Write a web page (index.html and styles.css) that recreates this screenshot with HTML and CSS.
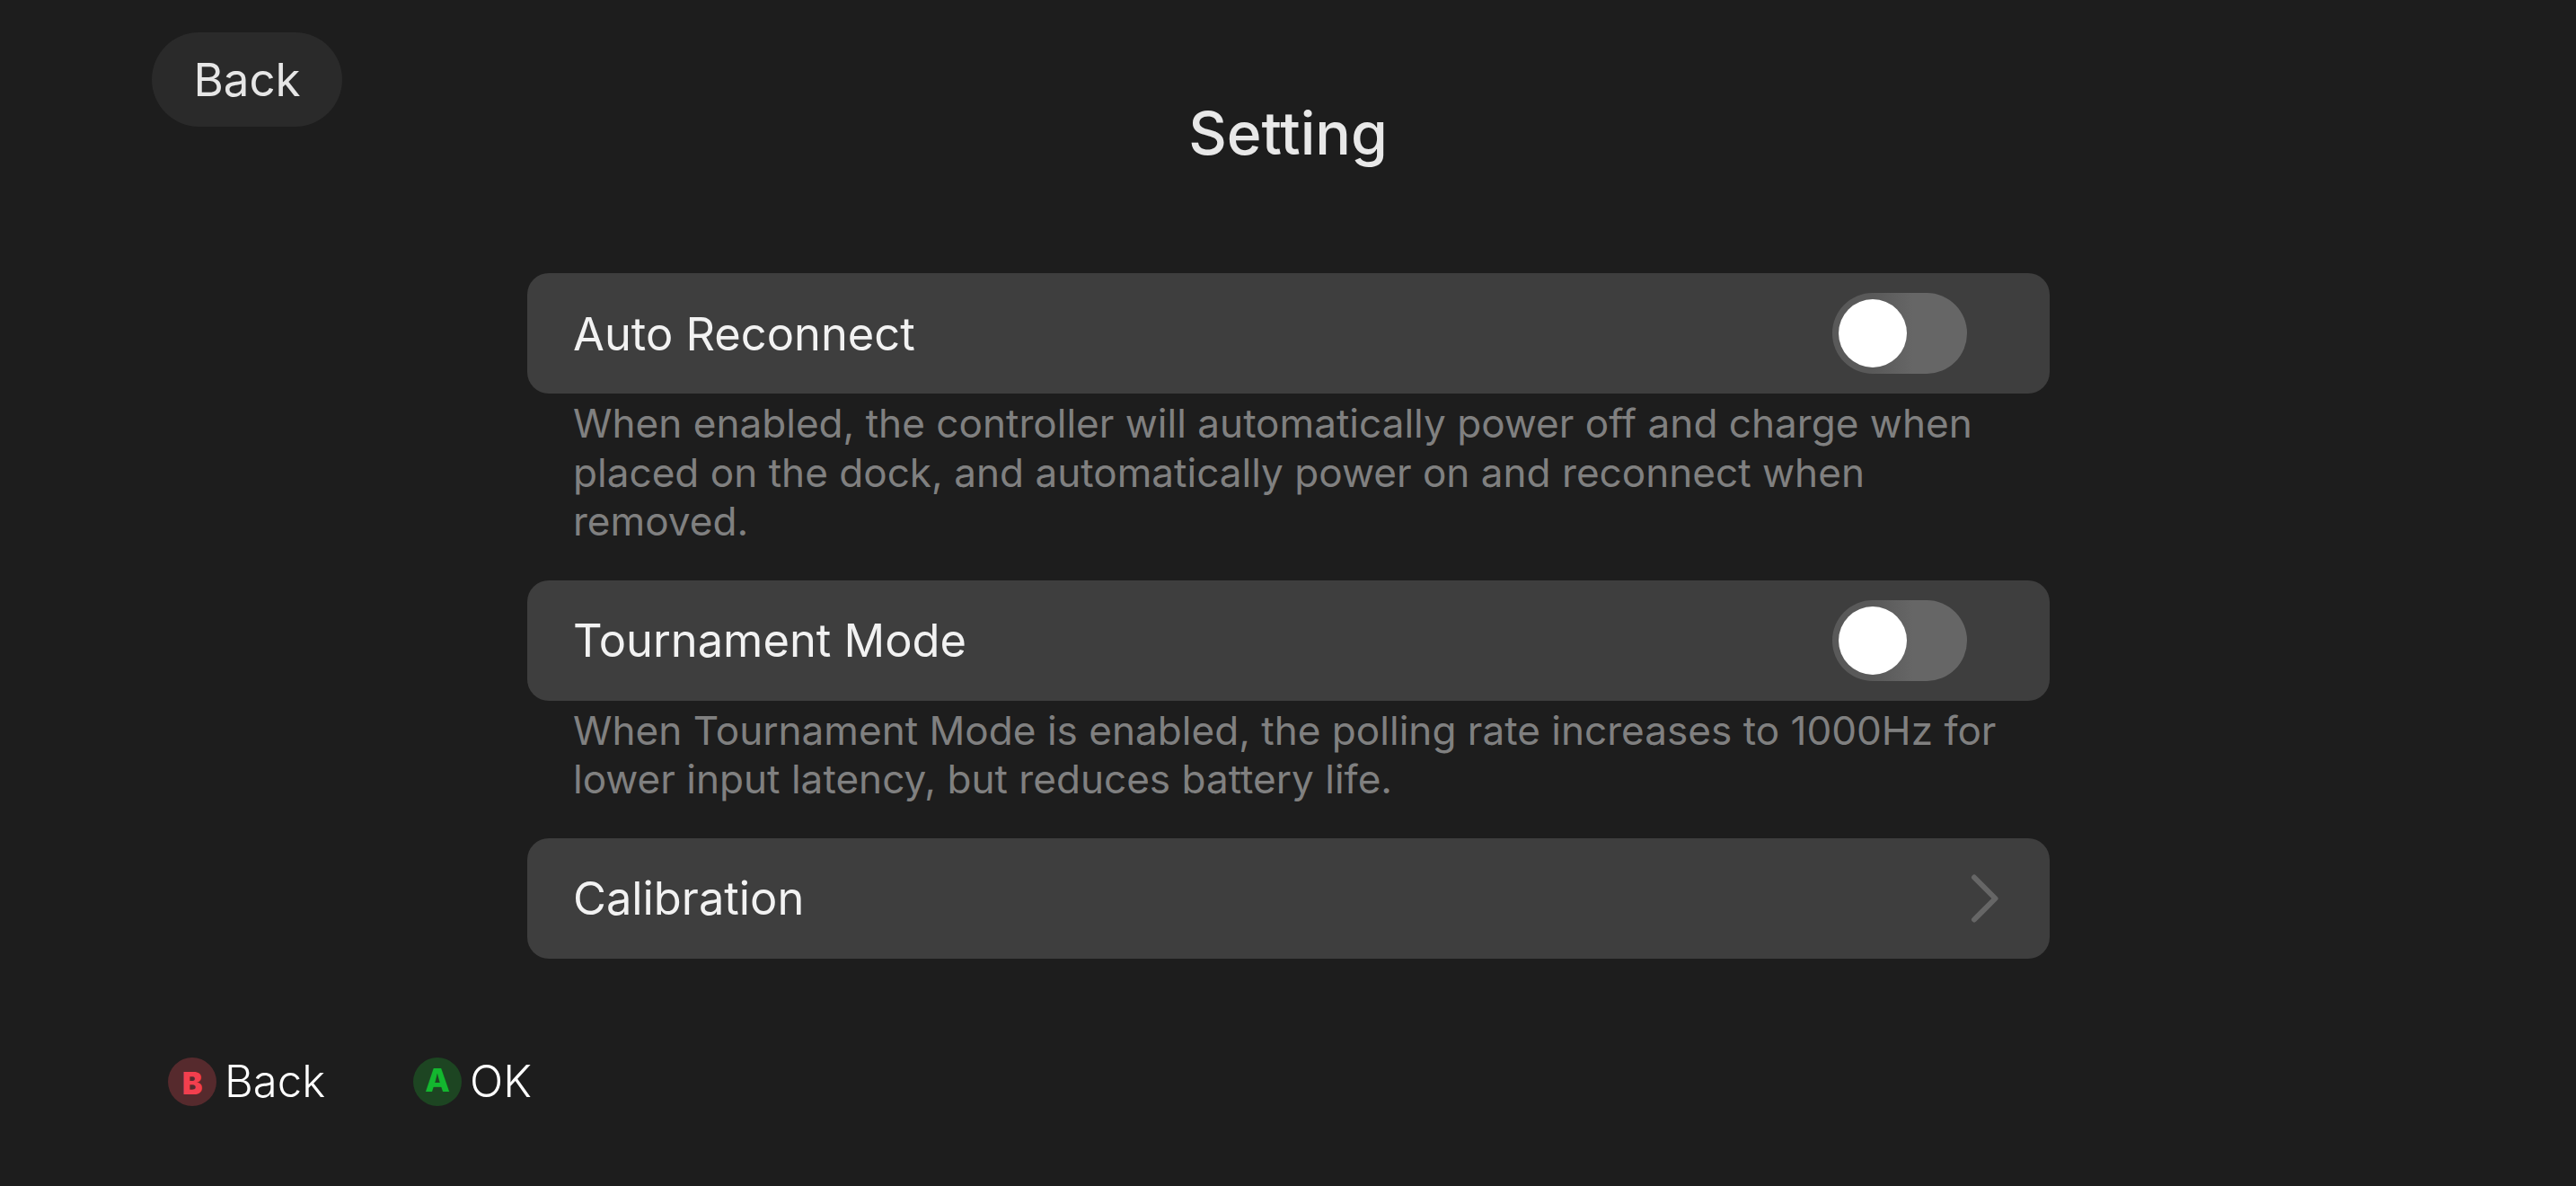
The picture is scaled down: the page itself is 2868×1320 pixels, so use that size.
FILE: index.html
```html
<!DOCTYPE html>
<html lang="en">
<head>
<meta charset="utf-8">
<title>Setting</title>
<link rel="stylesheet" href="styles.css">
</head>
<body>
<div class="page">
  <header class="header">
    <button class="back-btn">Back</button>
    <h1 class="title">Setting</h1>
  </header>
  <main class="list">
    <section class="group">
      <div class="row">
        <span class="row-label">Auto Reconnect</span>
        <span class="toggle"><span class="knob"></span></span>
      </div>
      <p class="desc">When enabled, the controller will automatically power off and charge when placed on the dock, and automatically power on and reconnect when removed.</p>
    </section>
    <section class="group">
      <div class="row">
        <span class="row-label">Tournament Mode</span>
        <span class="toggle"><span class="knob"></span></span>
      </div>
      <p class="desc">When Tournament Mode is enabled, the polling rate increases to 1000Hz for lower input latency, but reduces battery life.</p>
    </section>
    <section class="group">
      <div class="row">
        <span class="row-label">Calibration</span>
        <svg class="chevron" viewBox="0 0 36 60" width="36" height="60" aria-hidden="true"><path d="M6 6.5 L29.5 30 L6 53.5" fill="none" stroke="#666666" stroke-width="6" stroke-linecap="round" stroke-linejoin="round"/></svg>
      </div>
    </section>
  </main>
  <footer class="footer">
    <div class="hint">
      <span class="badge badge-b">B</span>
      <span class="hint-label">Back</span>
    </div>
    <div class="hint">
      <span class="badge badge-a">A</span>
      <span class="hint-label">OK</span>
    </div>
  </footer>
</div>
</body>
</html>
```
FILE: styles.css
```css
* { box-sizing: border-box; }
html, body { margin: 0; padding: 0; height: 100%; }
body {
  background: #1d1d1d;
  font-family: Inter, "Noto Sans", sans-serif;
  color: #fff;
  overflow: hidden;
}
.page {
  width: 2868px;
  height: 1320px;
  display: flex;
  flex-direction: column;
}
.header {
  display: grid;
  grid-template-columns: 1fr auto 1fr;
  height: 304px;
  padding-top: 36px;
}
.back-btn {
  justify-self: start;
  align-self: start;
  margin-left: 169px;
  width: 212px;
  height: 105px;
  border: 0;
  border-radius: 53px;
  background: #2a2a2a;
  color: #e6e6e6;
  font: 400 51px Inter, sans-serif;
  padding: 0;
}
.title {
  grid-column: 2;
  margin: 76px 0 0;
  font-size: 66px;
  font-weight: 500;
  line-height: 72px;
  color: #e8e8e8;
  height: 72px;
}
.list {
  width: 1695px;
  margin: 0 0 0 587px;
  display: flex;
  flex-direction: column;
}
.group { display: flex; flex-direction: column; }
.row {
  height: 134px;
  border-radius: 24px;
  background: #3e3e3e;
  display: flex;
  align-items: center;
  justify-content: space-between;
  padding: 0 92px 0 51px;
}
.row-label {
  font-size: 50.6px;
  color: #f2f2f2;
}
.toggle {
  width: 150px;
  height: 90px;
  border-radius: 45px;
  background: linear-gradient(90deg, #595959 0%, #595959 30%, #666666 60%, #666666 100%);
  padding: 7px;
  display: flex;
}
.knob {
  width: 76px;
  height: 76px;
  border-radius: 50%;
  background: #fff;
}
.chevron { margin-right: -38px; }
.desc {
  margin: 0;
  padding: 6px 51px 38px;
  font-size: 44.1px;
  line-height: 54.5px;
  color: #808080;
}
.footer {
  display: flex;
  gap: 98px;
  margin-top: 110px;
  padding-left: 187px;
}
.hint {
  display: flex;
  align-items: center;
  gap: 9px;
  height: 54px;
}
.badge {
  width: 54px;
  height: 54px;
  border-radius: 50%;
  display: flex;
  align-items: center;
  justify-content: center;
  font-weight: 800;
}
.badge-b { background: #562a2d; color: #f23f4e; font-size: 34px; font-weight: 900; padding-top: 3px; }
.badge-a { background: #1d4522; color: #13b72f; font-size: 36px; padding-bottom: 3px; }
.hint-label {
  font-size: 49px;
  font-weight: 300;
  color: #fff;
}
```
